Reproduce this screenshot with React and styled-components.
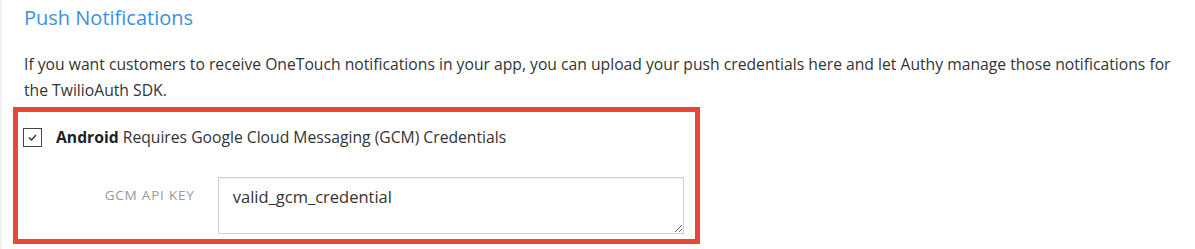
import React, { useEffect, useRef } from "react";
import styled, { createGlobalStyle } from "styled-components";

const GlobalStyle = createGlobalStyle`
  html, body {
    margin: 0;
    padding: 0;
    background: #fff;
  }
  body {
    font-family: "Open Sans", Lato, "Noto Sans", sans-serif;
    color: #333;
  }
`;

const Page = styled.div`
  min-height: 249px;
  box-sizing: border-box;
  border-left: 2px solid #f0f0f0;
  padding: 4px 0 0 22px;
`;

const Title = styled.h2`
  margin: 0;
  font-size: 20px;
  font-weight: 400;
  line-height: 28px;
  color: #3d8fe0;
`;

const Intro = styled.p`
  margin: 19px 0 0;
  font-size: 15.7px;
  line-height: 26px;
  color: #333;
`;

const Highlight = styled.section`
  box-sizing: border-box;
  width: 687px;
  height: 137px;
  margin: 4px 0 0 -11px;
  border: 5px solid #e8483a;
  padding: 15px 11px 0 5px;
`;

const CheckRow = styled.label`
  display: flex;
  align-items: center;
  gap: 14px;
  font-size: 15.7px;
  line-height: 20px;
  color: #333;
  b {
    font-weight: 700;
    color: #222;
  }
`;

const CheckBox = styled.span`
  box-sizing: border-box;
  width: 19px;
  height: 19px;
  border: 1px solid #444;
  display: flex;
  align-items: center;
  justify-content: center;
`;

const FieldRow = styled.div`
  display: flex;
  align-items: flex-start;
  gap: 23px;
  margin-top: 30px;
`;

const FieldLabel = styled.span`
  width: 172px;
  text-align: right;
  padding-top: 9px;
  font-size: 13.5px;
  letter-spacing: 0.8px;
  color: #999;
  text-transform: uppercase;
`;

const Input = styled.textarea`
  box-sizing: border-box;
  width: 467px;
  height: 57px;
  border: 1px solid #cfcfcf;
  box-shadow: inset 0 1px 2px rgba(0, 0, 0, 0.06);
  padding: 8px 14px 6px;
  font-family: "Open Sans", Lato, sans-serif;
  font-size: 16.5px;
  line-height: 22px;
  color: #333;
  outline: none;
  resize: vertical;
  caret-color: #222;
`;

export default function App() {
  const ref = useRef(null);

  useEffect(() => {
    const el = ref.current;
    if (el) {
      el.focus();
      el.setSelectionRange(el.value.length, el.value.length);
    }
  }, []);

  return (
    <>
      <GlobalStyle />
      <Page>
        <Title>Push Notifications</Title>
        <Intro>
          If you want customers to receive OneTouch notifications in your app, you can upload your push
          credentials here and let Authy manage those notifications for
          <br />
          the TwilioAuth SDK.
        </Intro>
        <Highlight>
          <CheckRow>
            <CheckBox>
              <svg width="9" height="7" viewBox="0 0 9 7" fill="none">
                <path d="M1 3.5 L3.5 6 L8 1" stroke="#333" strokeWidth="1.3" />
              </svg>
            </CheckBox>
            <span>
              <b>Android</b> Requires Google Cloud Messaging (GCM) Credentials
            </span>
          </CheckRow>
          <FieldRow>
            <FieldLabel>GCM API Key</FieldLabel>
            <Input ref={ref} defaultValue="valid_gcm_credential" />
          </FieldRow>
        </Highlight>
      </Page>
    </>
  );
}
